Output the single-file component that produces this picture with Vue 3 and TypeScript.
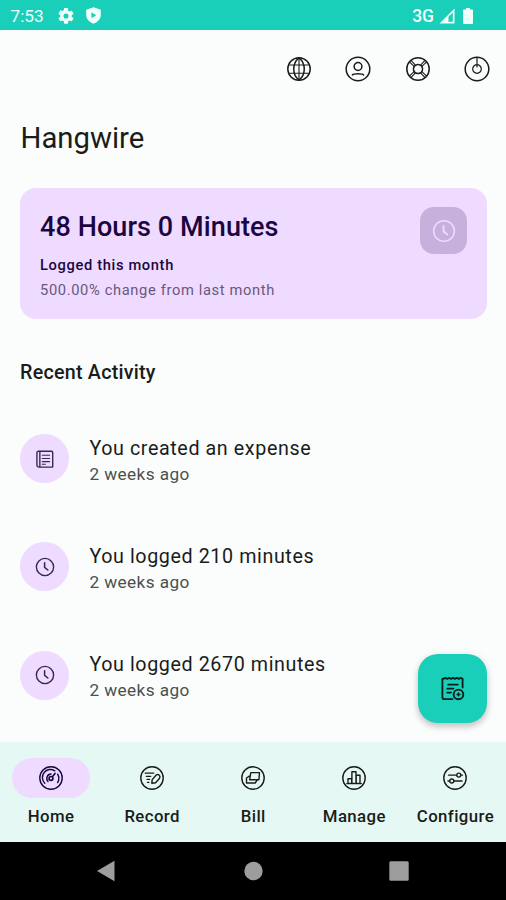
<script setup lang="ts">
interface Glyph {
  d: string
  width?: number
}

const ring = 'M13 1.2a11.8 11.8 0 1 0 0 23.6a11.8 11.8 0 1 0 0-23.6z'
const smallRing = 'M13 1.8a11.2 11.2 0 1 0 0 22.4a11.2 11.2 0 1 0 0-22.4z'

const icons: Record<string, Glyph[]> = {
  globe: [
    { d: smallRing },
    { d: 'M13 1.8c-7 5.5-7 17 0 22.4M13 1.8c7 5.5 7 17 0 22.4' },
    { d: 'M3 9h20M3 17.3h20M13 2v22', width: 1.1 },
  ],
  account: [
    { d: ring },
    { d: 'M13 6.6a3.9 3.9 0 1 0 0 7.8a3.9 3.9 0 1 0 0-7.8zM7.4 18.9c1.4-1.7 9.8-1.7 11.2 0' },
  ],
  help: [
    { d: smallRing },
    { d: 'M13 8.4a4.6 4.6 0 1 0 0 9.2a4.6 4.6 0 1 0 0-9.2z' },
    { d: 'M4.7 6.2l4.9 4.6M6.2 4.7l4.7 4.9M19.8 4.7l-4.7 4.9M21.3 6.2l-4.9 4.6M4.7 19.8l4.9-4.6M6.2 21.3l4.7-4.9M19.8 21.3l-4.7-4.9M21.3 19.8l-4.9-4.6', width: 1.1 },
  ],
  power: [
    { d: ring },
    { d: 'M13 8.7a4.3 4.3 0 1 0 0 8.6a4.3 4.3 0 1 0 0-8.6zM13 2v9', width: 1.2 },
  ],
  clock: [
    { d: smallRing },
    { d: 'M12.5 7.6v6l4.2 3.3', width: 2 },
  ],
  receipt: [
    { d: 'M6.5 3h15c1 0 1.5.5 1.5 1.5V23.5H5.5c-2 0-3-1-3-2.5V5c0-1.3.8-2 2-2zM6.3 3.5V23' },
    { d: 'M9.5 8.2h9.5M9.5 12.4h9.5M9.5 16.4h9.5M9.5 19.8h4', width: 1.4 },
  ],
  home: [
    { d: smallRing },
    { d: 'M6.8 18.2a8 8 0 0 1 10-12.4M19.6 9.2a8 8 0 0 1 0 8.4M10 16.4a4.4 4.4 0 0 1 3-7.4' },
    { d: 'M13 11.5a1.9 1.9 0 1 0 0 3.8a1.9 1.9 0 1 0 0-3.8zM14.4 11.8l2.6-3.3', width: 1.7 },
  ],
  record: [
    { d: smallRing },
    { d: 'M6.2 8.2h8.5M7.2 11.3h4.6M8 14.3h2.6M8.4 17.3h1.6', width: 1.2 },
    { d: 'M12.8 18.2l.4-3.6l4-4.6c1.7-1.5 4.8.5 3.4 3.2l-4 4.5z' },
  ],
  bill: [
    { d: smallRing },
    { d: 'M10.8 7.6h8.7l-.6 7.2H9.6zM9.3 11.2L6.5 13v5h8.7l1.8-2.6' },
  ],
  manage: [
    { d: smallRing },
    { d: 'M7 18.5v-4.8h3.7v4.8zM10.9 18.5V6.7H15v11.8zM15.2 18.5v-8.2H19v8.2zM5.8 18.6h14.5' },
  ],
  configure: [
    { d: smallRing },
    { d: 'M6.5 10.1h8M19 10.1h1.5M16.8 8.1a2 2 0 1 0 0 4a2 2 0 1 0 0-4zM6 16h1.6M12 16h8M9.8 14a2 2 0 1 0 0 4a2 2 0 1 0 0-4z' },
  ],
}

const actions = [
  { icon: 'globe', label: 'Language' },
  { icon: 'account', label: 'Account' },
  { icon: 'help', label: 'Help' },
  { icon: 'power', label: 'Sign out' },
]

const activity = [
  { icon: 'receipt', title: 'You created an expense', time: '2 weeks ago' },
  { icon: 'clock', title: 'You logged 210 minutes', time: '2 weeks ago' },
  { icon: 'clock', title: 'You logged 2670 minutes', time: '2 weeks ago' },
]

const tabs = [
  { icon: 'home', label: 'Home', active: true },
  { icon: 'record', label: 'Record', active: false },
  { icon: 'bill', label: 'Bill', active: false },
  { icon: 'manage', label: 'Manage', active: false },
  { icon: 'configure', label: 'Configure', active: false },
]
</script>

<template>
  <div class="screen">
    <header class="status">
      <span class="time">7:53</span>
      <svg class="gear" viewBox="2 2 20 20">
        <path fill-rule="evenodd" d="M19.14 12.94c.04-.3.06-.61.06-.94s-.02-.64-.07-.94l2.03-1.58a.49.49 0 0 0 .12-.61l-1.92-3.32a.49.49 0 0 0-.59-.22l-2.39.96a7 7 0 0 0-1.62-.94l-.36-2.54A.48.48 0 0 0 13.92 2h-3.84a.48.48 0 0 0-.47.41l-.36 2.54c-.59.24-1.13.57-1.62.94l-2.39-.96a.49.49 0 0 0-.59.22L2.74 8.87a.48.48 0 0 0 .12.61l2.03 1.58a7 7 0 0 0 0 1.88l-2.03 1.58a.49.49 0 0 0-.12.61l1.92 3.32c.12.22.37.29.59.22l2.39-.96c.5.38 1.03.7 1.62.94l.36 2.54c.05.24.24.41.48.41h3.84c.24 0 .44-.17.47-.41l.36-2.54c.59-.24 1.13-.56 1.62-.94l2.39.96c.22.08.47 0 .59-.22l1.92-3.32a.48.48 0 0 0-.12-.61zM12 15.2a3.2 3.2 0 1 1 0-6.4a3.2 3.2 0 0 1 0 6.4z" />
      </svg>
      <svg class="shield" viewBox="0 0 15 17">
        <path fill-rule="evenodd" d="M7.5.3L14.8 2.8V8c0 4-2.9 7-7.3 8.7C3.2 15 .2 12 .2 8V2.8zM5.5 5.2v6l4.7-3z" />
      </svg>
      <span class="network">3G</span>
      <svg class="signal" viewBox="0 0 16 16">
        <path fill-rule="evenodd" d="M15.5.5v15H.5zM13.8 4.5L9.5 8.8v5h4.3z" />
      </svg>
      <svg class="battery" viewBox="0 0 10 16">
        <path d="M3 0h4v1.6h2c.6 0 1 .4 1 1V15c0 .6-.4 1-1 1H1c-.6 0-1-.4-1-1V2.6c0-.6.4-1 1-1h2z" />
      </svg>
    </header>

    <main class="content">
      <nav class="actions">
        <button v-for="action in actions" :key="action.icon" class="action" :aria-label="action.label">
          <svg class="icon" viewBox="0 0 26 26">
            <path v-for="(g, i) in icons[action.icon]" :key="i" :d="g.d" :stroke-width="g.width ?? 1.5" />
          </svg>
        </button>
      </nav>

      <h1 class="title">Hangwire</h1>

      <section class="card">
        <div class="summary">
          <h2 class="hours">48 Hours 0 Minutes</h2>
          <p class="logged">Logged this month</p>
          <p class="change">500.00% change from last month</p>
        </div>
        <div class="badge">
          <svg class="icon" viewBox="0 0 26 26">
            <path v-for="(g, i) in icons.clock" :key="i" :d="g.d" :stroke-width="g.width ?? 1.7" />
          </svg>
        </div>
      </section>

      <h3 class="heading">Recent Activity</h3>

      <ul class="list">
        <li v-for="item in activity" :key="item.title" class="row">
          <span class="avatar">
            <svg class="icon" viewBox="0 0 26 26">
              <path v-for="(g, i) in icons[item.icon]" :key="i" :d="g.d" :stroke-width="g.width ?? 1.8" />
            </svg>
          </span>
          <div class="text">
            <p class="what">{{ item.title }}</p>
            <p class="when">{{ item.time }}</p>
          </div>
        </li>
      </ul>

      <button class="fab" aria-label="Add record">
        <svg class="icon" viewBox="0 0 26 26">
          <path stroke-width="1.9" d="M23.500 12V3l-2-1l-2 1l-2-1l-2 1l-2-1l-2 1l-2-1l-2 1l-2-1l-2 1H2.500V22c0 1.300.8 2 2 2h8.500" />
          <path stroke-width="1.8" d="M8.500 9h10M7.500 13.200h6.500M7.500 17.200h4" />
          <circle cx="19.2" cy="19.2" r="5" stroke-width="2" />
          <path stroke-width="1.6" d="M19.200 17.800v2.800M17.800 19.200h2.800" />
        </svg>
      </button>
    </main>

    <nav class="tabs">
      <div v-for="tab in tabs" :key="tab.label" class="tab" :class="{ active: tab.active }">
        <span class="pill">
          <svg class="icon" viewBox="0 0 26 26">
            <path v-for="(g, i) in icons[tab.icon]" :key="i" :d="g.d" :stroke-width="g.width ?? 1.4" />
          </svg>
        </span>
        <span class="label">{{ tab.label }}</span>
      </div>
    </nav>

    <footer class="system">
      <svg viewBox="0 0 20 22"><path d="M1 11L18.500.8v20.400z" /></svg>
      <svg viewBox="0 0 20 22"><circle cx="10.5" cy="11" r="9.2" /></svg>
      <svg viewBox="0 0 20 22"><rect x=".3" y="1.3" width="19.4" height="19.4" rx="1.5" /></svg>
    </footer>
  </div>
</template>

<style>
body {
  margin: 0;
  background: #fafdfb;
}
</style>

<style scoped>
.screen {
  width: 506px;
  height: 900px;
  display: flex;
  flex-direction: column;
  overflow: hidden;
  background: #fafdfb;
  color: #191c1b;
  font-family: Roboto, "Liberation Sans", sans-serif;
}
h1, h2, h3, p, ul {
  margin: 0;
  padding: 0;
}
button {
  border: 0;
  padding: 0;
  background: none;
  color: inherit;
}
.icon {
  display: block;
  width: 26px;
  height: 26px;
  fill: none;
  stroke: currentColor;
  stroke-linejoin: round;
  stroke-linecap: round;
}
.status {
  height: 29.5px;
  flex: none;
  box-sizing: border-box;
  padding: 2px 33px 0 10.5px;
  display: flex;
  align-items: center;
  background: #1acfb9;
  color: #effffb;
}
.status svg {
  fill: currentColor;
}
.time {
  width: 47.5px;
  font-size: 17.2px;
}
.gear {
  width: 16px;
  height: 16px;
}
.shield {
  width: 15px;
  height: 17px;
  margin-left: 12px;
}
.network {
  margin-left: auto;
  font-size: 17.5px;
  font-weight: 500;
}
.signal {
  width: 16px;
  height: 16px;
  margin-left: 4.5px;
}
.battery {
  width: 10px;
  height: 16px;
  margin-left: 8.5px;
}
.content {
  position: relative;
  flex: 1;
  min-height: 0;
  padding: 0 19px 0 20px;
}
.actions {
  display: flex;
  justify-content: flex-end;
  gap: 33.5px;
  padding-top: 26px;
  margin-right: -3px;
}
.action {
  display: block;
}
.title {
  margin-top: 37px;
  padding-left: 0.5px;
  font-size: 29.3px;
  line-height: 38px;
  font-weight: 400;
}
.card {
  height: 131px;
  box-sizing: border-box;
  margin-top: 31.5px;
  padding: 19px 20px 0;
  display: flex;
  justify-content: space-between;
  align-items: flex-start;
  border-radius: 16px;
  background: #eedbff;
  color: #1b0641;
}
.hours {
  font-size: 27px;
  line-height: 40px;
  font-weight: 500;
  letter-spacing: 0.09px;
}
.logged {
  margin-top: 8px;
  font-size: 14.7px;
  line-height: 20px;
  font-weight: 500;
  letter-spacing: 0.64px;
}
.change {
  margin-top: 5px;
  font-size: 14.7px;
  line-height: 20px;
  letter-spacing: 0.64px;
  color: #6a577d;
}
.badge {
  width: 47px;
  height: 47px;
  display: grid;
  place-items: center;
  border-radius: 14px;
  background: #c7b0dc;
  color: #eedbff;
}
.badge .icon {
  width: 24px;
  height: 24px;
}
.heading {
  margin-top: 40px;
  font-size: 19.7px;
  line-height: 28px;
  font-weight: 500;
  letter-spacing: 0.24px;
}
.list {
  margin-top: 47px;
  display: flex;
  flex-direction: column;
  gap: 59.4px;
  list-style: none;
}
.row {
  height: 49px;
  display: flex;
  align-items: center;
  gap: 20.4px;
}
.avatar {
  width: 49px;
  height: 49px;
  display: grid;
  place-items: center;
  border-radius: 50%;
  background: #eedbff;
  color: #3a2853;
}
.avatar .icon {
  width: 20px;
  height: 20px;
}
.text {
  padding-top: 4px;
}
.what {
  font-size: 19.7px;
  line-height: 26px;
  letter-spacing: 0.6px;
}
.when {
  font-size: 17.2px;
  line-height: 24px;
  letter-spacing: 0.43px;
  color: #4a504e;
}
.fab {
  position: absolute;
  right: 19px;
  bottom: 19px;
  width: 69px;
  height: 69px;
  display: grid;
  place-items: center;
  border-radius: 20px;
  background: #1acfb9;
  color: #06201c;
  box-shadow: 0 4px 6px rgba(0, 0, 0, 0.18), 0 1px 10px rgba(0, 0, 0, 0.08);
}
.fab .icon {
  width: 25px;
  height: 25px;
}
.tabs {
  height: 100px;
  flex: none;
  box-sizing: border-box;
  padding-left: 0.5px;
  display: grid;
  grid-template-columns: repeat(5, 1fr);
  background: #e6f8f3;
}
.tab {
  display: flex;
  flex-direction: column;
  align-items: center;
  padding-top: 15.5px;
}
.pill {
  width: 78px;
  height: 40px;
  display: grid;
  place-items: center;
  border-radius: 20px;
}
.active .pill {
  background: #eedbff;
  color: #1b0641;
}
.label {
  margin-top: 7.5px;
  font-size: 16.8px;
  line-height: 22px;
  font-weight: 500;
  letter-spacing: 0.4px;
}
.system {
  height: 58px;
  flex: none;
  box-sizing: border-box;
  padding: 0 97px 0 96px;
  display: flex;
  justify-content: space-between;
  align-items: center;
  background: #000;
}
.system svg {
  width: 20px;
  height: 22px;
  fill: #9d9d9d;
}
</style>
